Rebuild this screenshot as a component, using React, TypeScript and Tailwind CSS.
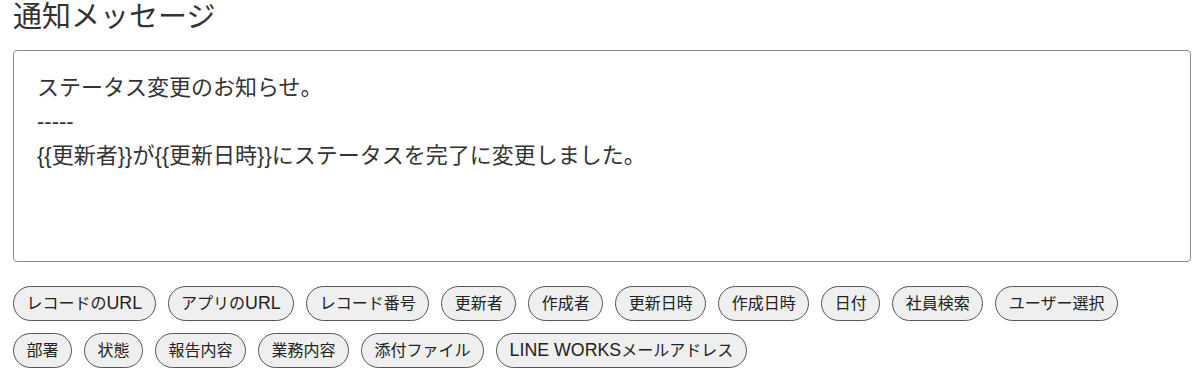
import React from 'react';

const FONT = '"Liberation Sans", "Noto Sans CJK JP", sans-serif';

// Placeholder tags inserted into the message body
const TAGS: string[][] = [
  ['レコードのURL', 'アプリのURL', 'レコード番号', '更新者', '作成者', '更新日時', '作成日時', '日付', '社員検索', 'ユーザー選択'],
  ['部署', '状態', '報告内容', '業務内容', '添付ファイル', 'LINE WORKSメールアドレス'],
];

const MESSAGE = [
  'ステータス変更のお知らせ。',
  '-----',
  '{{更新者}}が{{更新日時}}にステータスを完了に変更しました。',
];

// Latin runs are set a little larger so they sit like the Japanese system font
function Label({ text }: { text: string }) {
  const parts = text.split(/([A-Za-z][A-Za-z ]*)/).filter(Boolean);
  return (
    <span className="leading-[19px]">
      {parts.map((p, i) =>
        /^[A-Za-z]/.test(p) ? (
          <span key={i} className="text-[17.8px] leading-none">
            {p}
          </span>
        ) : (
          <React.Fragment key={i}>{p}</React.Fragment>
        )
      )}
    </span>
  );
}

function TagChip({ label }: { label: string }) {
  return (
    <button
      type="button"
      className="flex h-[35px] items-center rounded-full border border-[#555555] bg-[#efefef] px-[12.5px] text-[16px] leading-[19px] text-[#222222]"
    >
      <Label text={label} />
    </button>
  );
}

export default function App() {
  return (
    <div className="min-h-[390px] bg-white pl-[13px] pr-[9px] text-[#333333]" style={{ fontFamily: FONT }}>
      <h2 className="text-[29px] leading-[35px] font-normal text-[#333333]">通知メッセージ</h2>

      <div className="mt-[15px] h-[212px] rounded-[4px] border border-[#8a8a8a] bg-white px-[23px] pt-5">
        {MESSAGE.map((line, i) => (
          <p key={i} className="text-[22px] leading-[34px] text-[#333333]">
            {line}
          </p>
        ))}
      </div>

      <div className="mt-6 flex flex-col gap-3">
        {TAGS.map((row, i) => (
          <div key={i} className="flex flex-wrap gap-3">
            {row.map((t) => (
              <TagChip key={t} label={t} />
            ))}
          </div>
        ))}
      </div>
    </div>
  );
}
